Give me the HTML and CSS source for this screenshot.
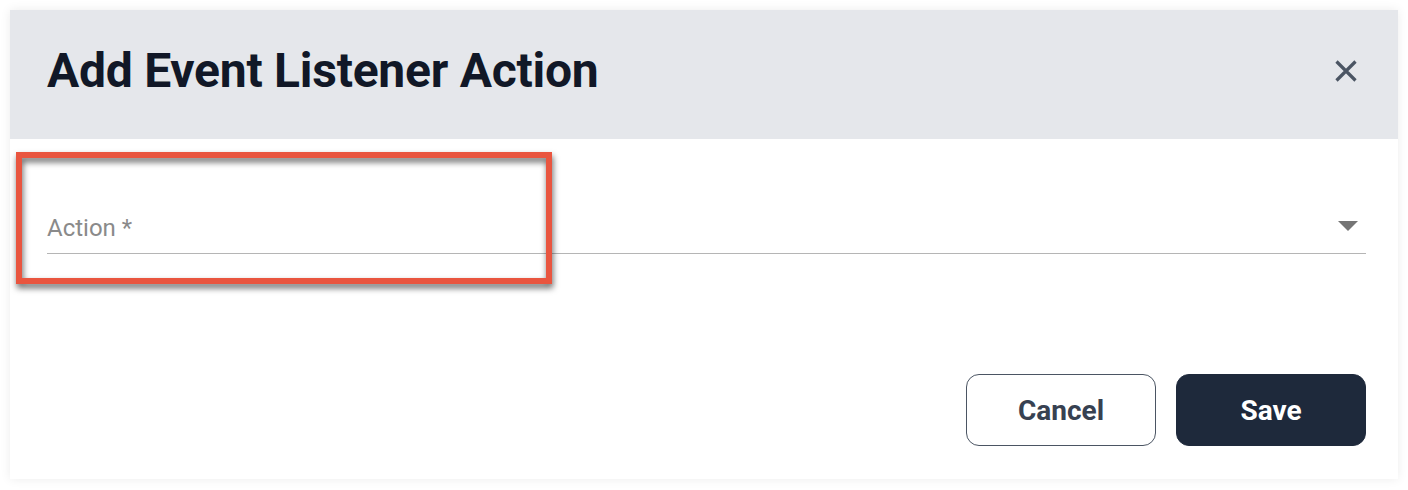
FILE: index.html
```html
<!DOCTYPE html>
<html lang="en">
<head>
<meta charset="utf-8">
<title>Add Event Listener Action</title>
<link rel="stylesheet" href="styles.css">
</head>
<body>
<div class="dialog">
  <div class="dialog-header">
    <h1 class="dialog-title">Add Event Listener Action</h1>
    <button class="close-btn" aria-label="Close">
      <svg width="22" height="22" viewBox="0 0 22 22"><path d="M1.5 1.5 L20.5 20.5 M20.5 1.5 L1.5 20.5" stroke="#4b5563" stroke-width="3.2" fill="none"/></svg>
    </button>
  </div>
  <div class="dialog-body">
    <div class="select-field">
      <span class="select-label">Action *</span>
      <svg class="select-arrow" width="20" height="10" viewBox="0 0 20 10"><path d="M0 0 L20 0 L10 10 Z" fill="#757575"/></svg>
    </div>
    <div class="dialog-actions">
      <button class="btn btn-outline">Cancel</button>
      <button class="btn btn-primary">Save</button>
    </div>
  </div>
</div>
<div class="annotation"></div>
</body>
</html>
```
FILE: styles.css
```css
* { box-sizing: border-box; }
html, body { margin: 0; padding: 0; background: #ffffff; }
body {
  font-family: Roboto, "Liberation Sans", sans-serif;
  padding: 10px;
  position: relative;
  height: 490px;
  overflow: hidden;
}
.dialog {
  width: 1388px;
  height: 469px;
  background: #ffffff;
  box-shadow: 0 0 10px rgba(0, 0, 0, 0.08);
  display: flex;
  flex-direction: column;
}
.dialog-header {
  height: 129px;
  background: #e5e7eb;
  display: flex;
  align-items: center;
  justify-content: space-between;
  padding: 0 41px 8px 37px;
}
.dialog-title {
  margin: 0;
  font-size: 48px;
  line-height: 56px;
  font-weight: 700;
  color: #111827;
  letter-spacing: -0.25px;
}
.close-btn {
  border: 0;
  background: transparent;
  padding: 0;
  width: 22px;
  height: 22px;
  display: flex;
}
.dialog-body {
  flex: 1;
  padding: 75px 32px 33px 37px;
  display: flex;
  flex-direction: column;
}
.select-field {
  display: flex;
  align-items: flex-start;
  justify-content: space-between;
  padding-bottom: 11px;
  border-bottom: 1px solid #b5b5b5;
}
.select-label {
  font-size: 24px;
  line-height: 28px;
  color: #8a8a8a;
}
.select-arrow {
  margin-top: 7px;
  margin-right: 8px;
}
.dialog-actions {
  margin-top: 120px;
  display: flex;
  justify-content: flex-end;
  gap: 20px;
}
.btn {
  width: 190px;
  height: 72px;
  border-radius: 13px;
  font-family: Roboto, "Liberation Sans", sans-serif;
  font-size: 28px;
  font-weight: 700;
  cursor: pointer;
}
.btn-outline {
  background: #ffffff;
  border: 1px solid #4b5563;
  color: #374151;
}
.btn-primary {
  background: #1e293b;
  border: 1px solid #1e293b;
  color: #ffffff;
}
.annotation {
  position: absolute;
  left: 16px;
  top: 152px;
  width: 536px;
  height: 132px;
  border: 6px solid #e9553f;
  filter: drop-shadow(1px 4px 3px rgba(0, 0, 0, 0.6));
}
```
